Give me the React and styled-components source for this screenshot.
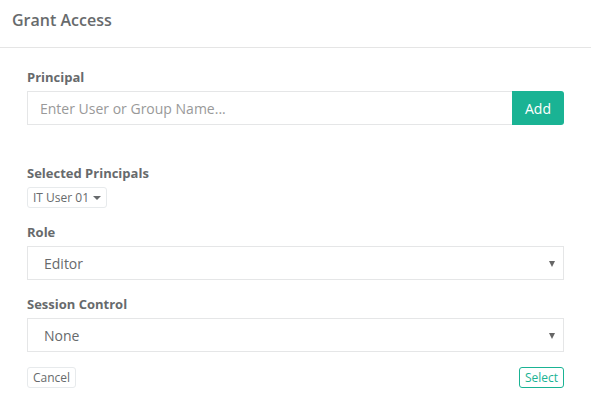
import React from "react";
import styled, { createGlobalStyle } from "styled-components";

const GlobalStyle = createGlobalStyle`
  body {
    margin: 0;
    background: #fff;
    font-family: "Open Sans", "Liberation Sans", sans-serif;
    color: #676a6c;
  }
`;

const Modal = styled.div`
  width: 591px;
  height: 410px;
  background: #fff;
`;

const Header = styled.div`
  height: 48px;
  box-sizing: border-box;
  padding: 0 12px;
  display: flex;
  align-items: center;
  border-bottom: 1px solid #e5e5e5;
`;

const Title = styled.h4`
  margin: 0;
  font-size: 16px;
  font-weight: 600;
  color: #676a6c;
  padding-bottom: 7px;
`;

const Body = styled.div`
  padding: 20px 27px 0;
  display: flex;
  flex-direction: column;
`;

const Group = styled.div`
  display: flex;
  flex-direction: column;
  margin-bottom: ${(p) => p.gap || 12}px;
`;

const Label = styled.label`
  font-size: 13px;
  font-weight: 700;
  color: #676a6c;
  line-height: 18px;
  margin-bottom: 5px;
`;

const InputRow = styled.div`
  display: flex;
  height: 34px;
`;

const TextInput = styled.input`
  flex: 1;
  min-width: 0;
  box-sizing: border-box;
  height: 34px;
  border: 1px solid #e5e6e7;
  border-right: none;
  padding: 0 12px;
  font-family: inherit;
  font-size: 14px;
  color: #676a6c;
  outline: none;
  &::placeholder {
    color: #999;
  }
`;

const AddButton = styled.button`
  width: 52px;
  height: 34px;
  border: none;
  border-radius: 0 3px 3px 0;
  background: #1ab394;
  color: #fff;
  font-family: inherit;
  font-size: 14px;
  padding: 0;
`;

const Tag = styled.div`
  align-self: flex-start;
  display: inline-flex;
  align-items: center;
  gap: 4px;
  height: 21px;
  box-sizing: border-box;
  padding: 0 5px;
  border: 1px solid #e7eaec;
  border-radius: 3px;
  font-size: 12px;
  color: #676a6c;
`;

const Caret = styled.span`
  width: 0;
  height: 0;
  border-left: 4px solid transparent;
  border-right: 4px solid transparent;
  border-top: 4px solid #676a6c;
  margin-top: 1px;
`;

const SelectBox = styled.div`
  height: 34px;
  box-sizing: border-box;
  border: 1px solid #e5e6e7;
  display: flex;
  align-items: center;
  justify-content: space-between;
  padding: 0 8px 0 16px;
  font-size: 14px;
  color: #676a6c;
`;

const SelectArrow = styled.span`
  width: 0;
  height: 0;
  border-left: 3px solid transparent;
  border-right: 3px solid transparent;
  border-top: 6px solid #666;
  margin-top: 2px;
`;

const Footer = styled.div`
  display: flex;
  justify-content: space-between;
  margin-top: 1px;
`;

const SmallButton = styled.button`
  height: 21px;
  box-sizing: border-box;
  padding: 0 5px;
  background: #fff;
  border: 1px solid ${(p) => (p.primary ? "#1ab394" : "#e7eaec")};
  border-radius: 3px;
  color: ${(p) => (p.primary ? "#1ab394" : "#676a6c")};
  font-family: inherit;
  font-size: 12px;
`;

export default function App() {
  return (
    <>
      <GlobalStyle />
      <Modal>
        <Header>
          <Title>Grant Access</Title>
        </Header>
        <Body>
          <Group gap={39}>
            <Label>Principal</Label>
            <InputRow>
              <TextInput placeholder="Enter User or Group Name..." />
              <AddButton>Add</AddButton>
            </InputRow>
          </Group>
          <Group gap={15}>
            <Label>Selected Principals</Label>
            <Tag>
              IT User 01 <Caret />
            </Tag>
          </Group>
          <Group gap={15}>
            <Label>Role</Label>
            <SelectBox>
              Editor <SelectArrow />
            </SelectBox>
          </Group>
          <Group gap={14}>
            <Label>Session Control</Label>
            <SelectBox>
              None <SelectArrow />
            </SelectBox>
          </Group>
          <Footer>
            <SmallButton>Cancel</SmallButton>
            <SmallButton primary>Select</SmallButton>
          </Footer>
        </Body>
      </Modal>
    </>
  );
}
